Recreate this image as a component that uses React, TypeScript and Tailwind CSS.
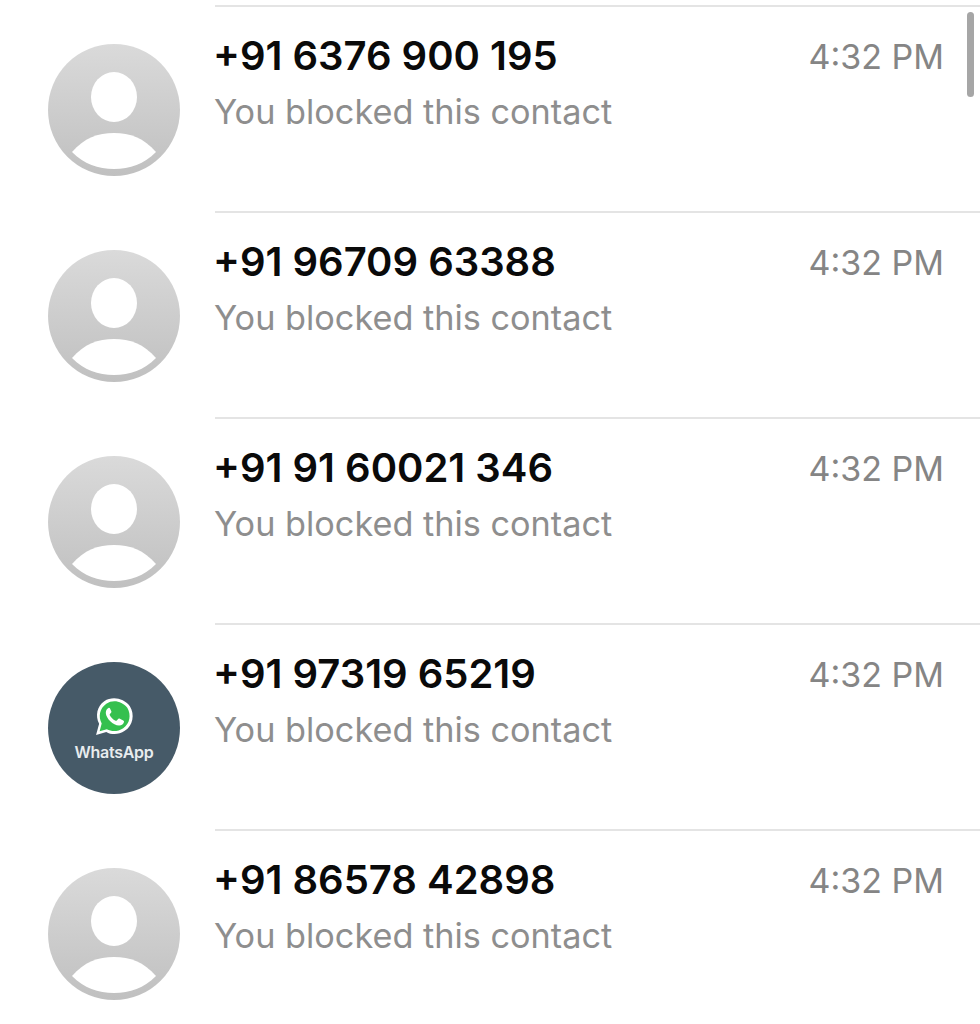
const rows = [
  { phone: '+91 6376 900 195' },
  { phone: '+91 96709 63388' },
  { phone: '+91 91 60021 346' },
  { phone: '+91 97319 65219', whatsapp: true },
  { phone: '+91 86578 42898' },
];

function DefaultAvatar() {
  return (
    <svg viewBox="0 0 132 132" className="w-[132px] h-[132px] shrink-0">
      <defs>
        <linearGradient id="avatarFill" x1="0" y1="0" x2="0" y2="1">
          <stop offset="0" stopColor="#dadada" />
          <stop offset="1" stopColor="#c0c0c0" />
        </linearGradient>
      </defs>
      <circle cx="66" cy="66" r="66" fill="url(#avatarFill)" />
      <ellipse cx="66" cy="53" rx="23" ry="25" fill="#ffffff" />
      <path d="M24 108 C36 94 50 89 66 89 C82 89 96 94 108 108 C96 120 82 125 66 125 C50 125 36 120 24 108 Z" fill="#ffffff" />
    </svg>
  );
}

function WhatsAppAvatar() {
  return (
    <div className="w-[132px] h-[132px] shrink-0 rounded-full bg-[#465a68] flex flex-col items-center pt-[34px]">
      <svg viewBox="0 0 40 40" className="w-[41px] h-[41px]">
        <path d="M2 38 L5 27 C1 19 3 10 10 5 C18 0 29 2 35 10 C40 18 38 29 30 34 C24 38 17 38 12 35 Z" fill="#ffffff" />
        <path d="M5.500 34.500 L7.500 26.800 C4 20 5.500 12 12 7.500 C18.500 3 27.500 5 32.500 11.500 C36.500 18.500 35 27 28.500 31.500 C23 35 17.500 35 12.500 32.500 Z" fill="#35c04f" />
        <path d="M14.500 11.500 C13 12 11.500 14 11.500 16.500 C12 22 18.500 28.500 24.500 28.800 C27 28.800 29 27 29.300 25 C29.300 24.300 29 24 28.500 23.800 L24.800 22 C24.200 21.800 23.800 22 23.500 22.400 L22.300 24 C21.800 24.300 21.400 24.300 21 24.100 C18.500 23 16.500 21 15.300 18.600 C15.200 18.100 15.300 17.800 15.600 17.500 L16.800 16.100 C17 15.700 17.100 15.300 16.900 14.900 L15.500 12 C15.300 11.600 15 11.400 14.500 11.500 Z" fill="#ffffff" />
      </svg>
      <span className="mt-[6px] text-[16px] leading-[18px] font-semibold text-[#e8ecee] tracking-[-0.3px]">WhatsApp</span>
    </div>
  );
}

export default function App() {
  return (
    <main className="relative w-[980px] h-[1024px] overflow-hidden bg-white font-['Inter',sans-serif]">
      <div className="pt-[5px]">
        {rows.map((row, i) => (
          <div key={i} className="flex h-[206px]">
            <div className="pl-[48px] pt-[39px] w-[215px] shrink-0">
              {row.whatsapp ? <WhatsAppAvatar /> : <DefaultAvatar />}
            </div>
            <div className="flex-1 border-t-2 border-[#e4e4e4] flex justify-between pr-[36px] pt-[24px]">
              <div>
                <div className="-ml-[2px] text-[40px] leading-[50px] font-semibold text-[#0a0a0a]">{row.phone}</div>
                <div className="-ml-[1px] mt-[6px] text-[34.25px] leading-[50px] text-[#8e8e8e]">You blocked this contact</div>
              </div>
              <div className="pt-[1px] text-[34px] leading-[50px] text-[#858585]">4:32 PM</div>
            </div>
          </div>
        ))}
      </div>
      <div className="absolute left-[967px] top-[12px] w-[7px] h-[85px] rounded-full bg-[#a6a6a6]" />
    </main>
  );
}
